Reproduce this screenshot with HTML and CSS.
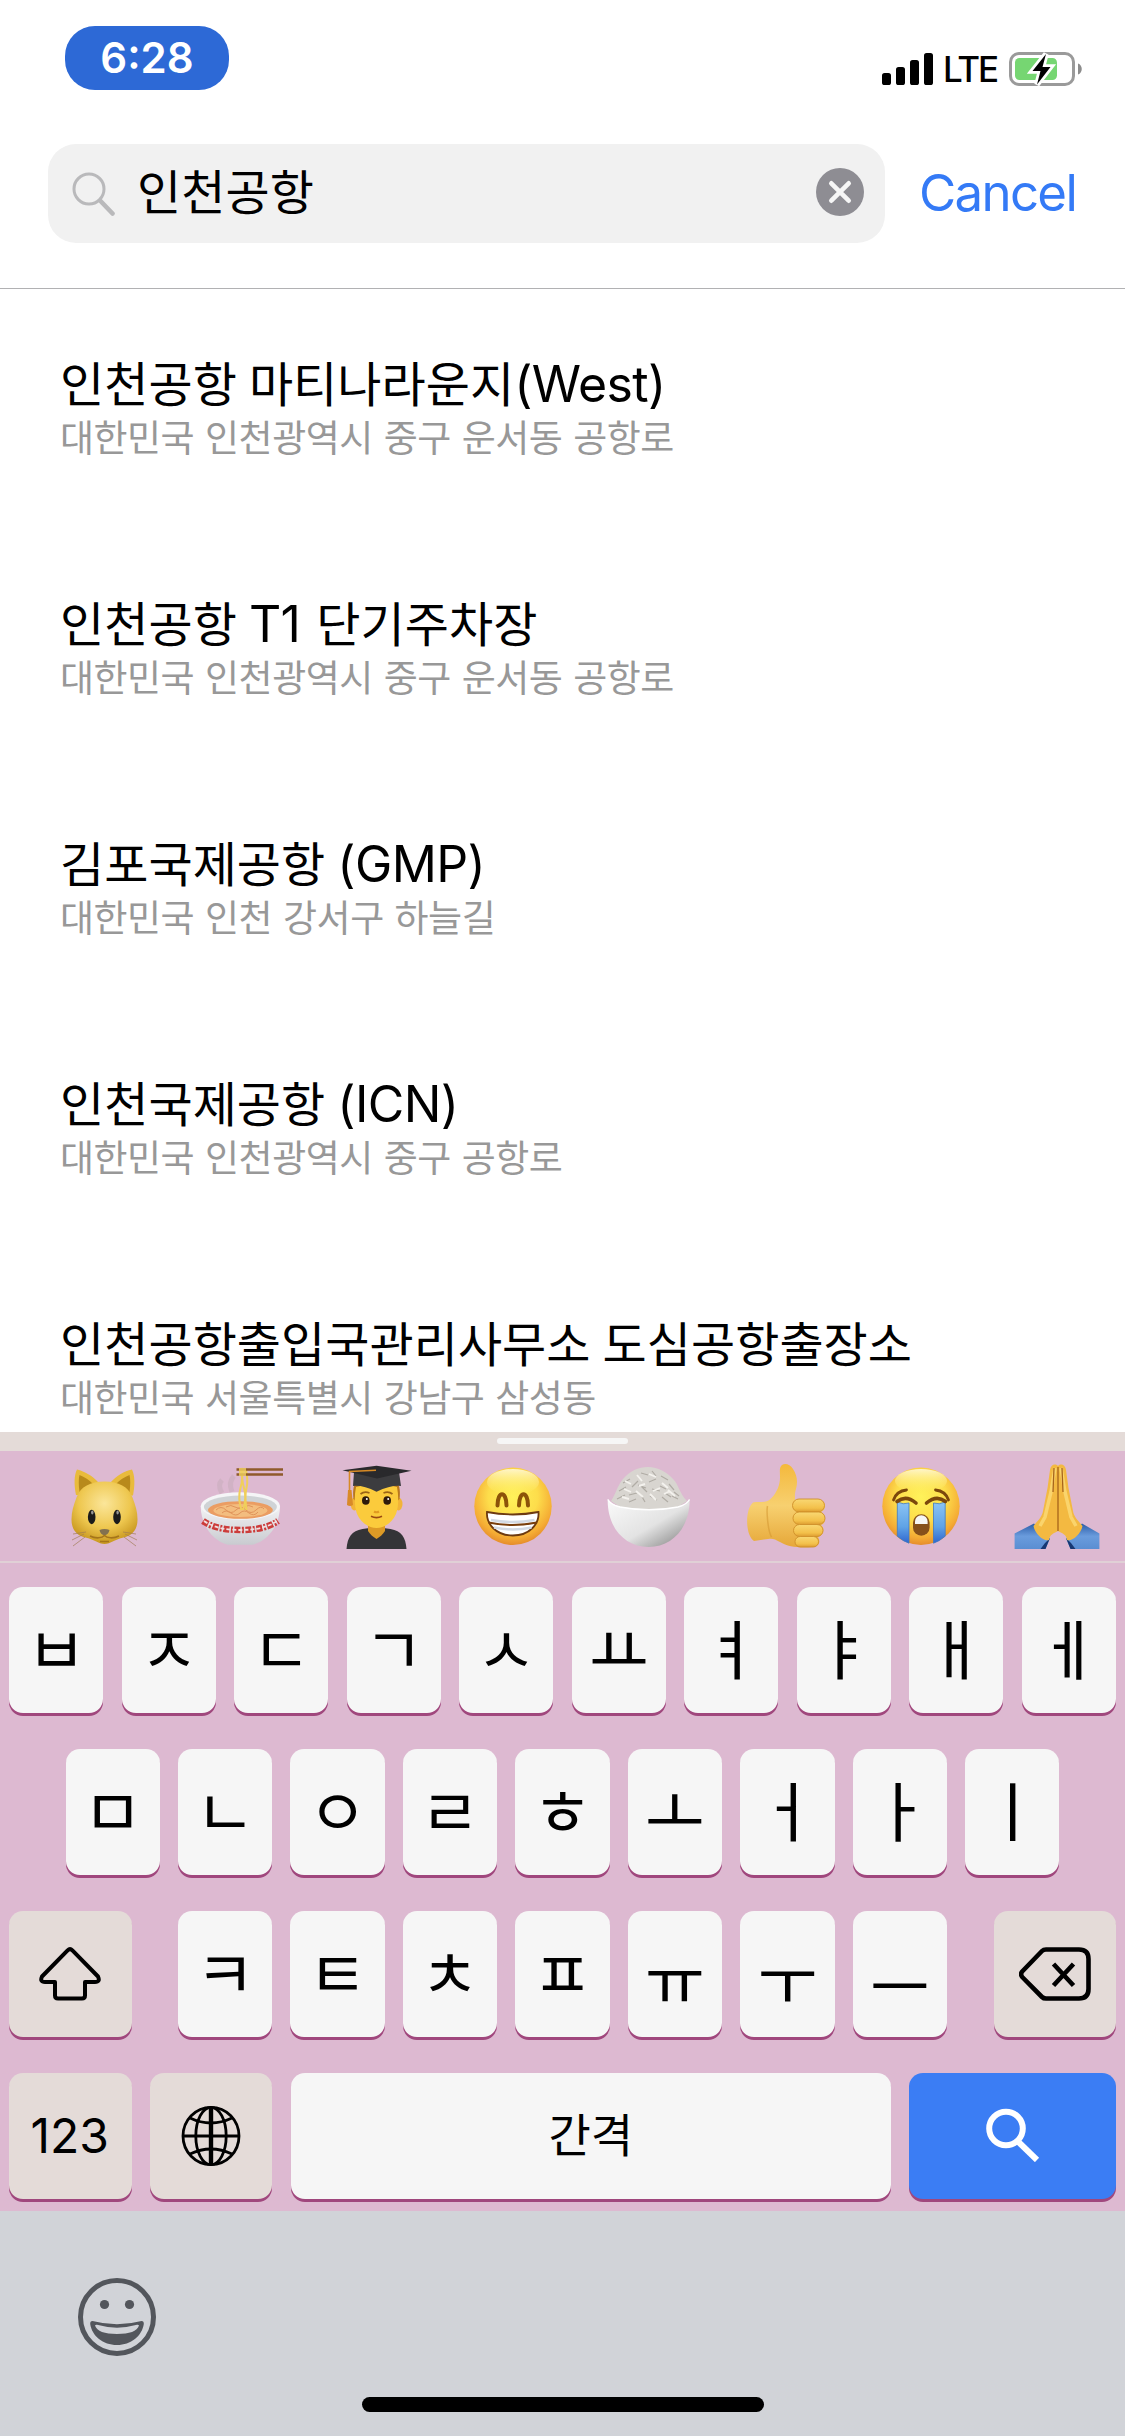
FILE: index.html
```html
<!DOCTYPE html>
<html lang="ko">
<head>
<meta charset="utf-8">
<title>인천공항</title>
<link rel="stylesheet" href="styles.css">
</head>
<body>
<div class="screen">
  <header class="status">
    <span class="clock">6:28</span>
    <div class="indicators">
      <svg class="signal" width="51" height="34" viewBox="0 0 51 34"><rect x="0" y="21" width="9" height="12" rx="2.6"/><rect x="14" y="15" width="9" height="18" rx="2.6"/><rect x="28" y="8" width="9" height="25" rx="2.6"/><rect x="42" y="1" width="9" height="32" rx="2.6"/></svg>
      <span class="network">LTE</span>
      <svg class="battery" width="74" height="34" viewBox="0 0 74 34">
        <rect x="1.5" y="1.5" width="63" height="31" rx="8.5" fill="none" stroke="#9a9a9a" stroke-width="3"/>
        <path d="M69 11.500c5 1.500 5 9.500 0 11z" fill="#8c8c8c"/>
        <rect x="6" y="6" width="42" height="22" rx="4.500" fill="#76d672"/>
        <path d="M37 2L23.500 19h8L28 32.500 41.500 15h-8z" fill="#000" stroke="#fff" stroke-width="5.500" paint-order="stroke"/>
      </svg>
    </div>
  </header>

  <div class="searchbar">
    <div class="field">
      <svg class="glass" width="44" height="44" viewBox="0 0 44 44" fill="none" stroke="#b9b9bb"><circle cx="17" cy="17" r="15" stroke-width="3"/><path d="M28.500 29L40.500 41.500" stroke-width="4.600" stroke-linecap="round"/></svg>
      <span class="query">인천공항</span>
      <svg class="clear" width="48" height="48" viewBox="0 0 48 48"><circle cx="24" cy="24" r="24" fill="#8e8d93"/><path d="M15.300 15.300L32.700 32.700M32.700 15.300L15.300 32.700" stroke="#f6f6f6" stroke-width="4.600" stroke-linecap="round"/></svg>
    </div>
    <span class="cancel">Cancel</span>
  </div>

  <main class="results">
    <article class="result"><h2>인천공항 마티나라운지<span class="latin">(West)</span></h2><p>대한민국 인천광역시 중구 운서동 공항로</p></article>
    <article class="result"><h2>인천공항 <span class="latin terminal">T1</span> 단기주차장</h2><p>대한민국 인천광역시 중구 운서동 공항로</p></article>
    <article class="result"><h2>김포국제공항 <span class="latin">(GMP)</span></h2><p>대한민국 인천 강서구 하늘길</p></article>
    <article class="result"><h2>인천국제공항 <span class="latin">(ICN)</span></h2><p>대한민국 인천광역시 중구 공항로</p></article>
    <article class="result"><h2>인천공항출입국관리사무소 도심공항출장소</h2><p>대한민국 서울특별시 강남구 삼성동</p></article>
  </main>

  <section class="keyboard">
    <div class="grabber"><i></i></div>
    <div class="emojis">
      <!-- cat -->
      <svg viewBox="0 0 88 88">
        <defs>
          <radialGradient id="cat" cx=".5" cy=".35" r=".65"><stop offset="0" stop-color="#fbe69a"/><stop offset=".6" stop-color="#eec74f"/><stop offset="1" stop-color="#c8971f"/></radialGradient>
          <radialGradient id="face" cx=".5" cy=".38" r=".64"><stop offset="0" stop-color="#fff25a"/><stop offset=".5" stop-color="#fddd4b"/><stop offset=".82" stop-color="#f5ac34"/><stop offset="1" stop-color="#e2862a"/></radialGradient>
          <linearGradient id="shine" x1="0" y1="0" x2="0" y2="1"><stop offset="0" stop-color="#fffbe0" stop-opacity=".85"/><stop offset="1" stop-color="#fff36a" stop-opacity="0"/></linearGradient>
          <linearGradient id="bowl" x1="0" y1="0" x2="1" y2="1"><stop offset="0" stop-color="#fafafa"/><stop offset=".55" stop-color="#e3e3e3"/><stop offset="1" stop-color="#7d7d7d"/></linearGradient>
          <linearGradient id="bowl2" x1="0" y1="0" x2="0" y2="1"><stop offset="0" stop-color="#f3f3f5"/><stop offset="1" stop-color="#c9cbd0"/></linearGradient>
          <linearGradient id="skin" x1="0" y1="0" x2="0" y2="1"><stop offset="0" stop-color="#f4b93c"/><stop offset=".5" stop-color="#f7d070"/><stop offset="1" stop-color="#e6a738"/></linearGradient>
          <linearGradient id="finger" x1="0" y1="0" x2="0" y2="1"><stop offset="0" stop-color="#f9d873"/><stop offset=".7" stop-color="#f3c04a"/><stop offset="1" stop-color="#dd9c31"/></linearGradient>
          <linearGradient id="tear" x1="0" y1="0" x2="0" y2="1"><stop offset="0" stop-color="#8cc4f5"/><stop offset=".6" stop-color="#5fa3e6"/><stop offset="1" stop-color="#2f66cf"/></linearGradient>
          <linearGradient id="sleeve" x1="0" y1="0" x2="0" y2="1"><stop offset="0" stop-color="#2c5da8"/><stop offset=".5" stop-color="#6a9cdd"/><stop offset="1" stop-color="#5a8ed2"/></linearGradient>
        </defs>
        <path d="M16 32C14 22 14 12 17 6.500c8 2 15 6 21.500 13h12C57 12.500 64 8 72 6.500c3 6 3 16 1 26z" fill="#e9bb3c"/>
        <path d="M19.500 29c-1-7-1-13 0-17 5 2 10 5 13.500 9zM69.500 29c1-7 1-13 0-17-5 2-10 5-13.500 9z" fill="#b88a1b"/>
        <path d="M44.500 18.500c14 0 24 5 28 16 3 8 5 14 5 22 0 10-5 16-14 18-8 1.500-13 6.500-19 6.500s-11-5-19-6.500c-9-2-14-8-14-18 0-8 2-14 5-22 4-11 14-16 28-16z" fill="url(#cat)"/>
        <ellipse cx="31.700" cy="54" rx="3.800" ry="7.200" fill="#1b1b1b"/><ellipse cx="57" cy="54" rx="3.800" ry="7.200" fill="#1b1b1b"/>
        <ellipse cx="32.300" cy="49.500" rx="1.200" ry="2" fill="#999"/><ellipse cx="57.600" cy="49.500" rx="1.200" ry="2" fill="#999"/>
        <path d="M39.500 67c3-1.500 7-1.500 10 0-.5 3-2.500 5-5 5.500-2.500-.5-4.500-2.500-5-5.500z" fill="#83714f"/>
        <path d="M30 73c6 3 12 2 14.500-.5 2.500 2.500 8.500 3.500 14.500.5M40 78.500h9" fill="none" stroke="#a5751a" stroke-width="1.600"/>
        <path d="M24 71L12 77M25 74L13 83M26 69L13 71M65 71l12 6M64 74l12 9M63 69l13 2" stroke="#a07a52" stroke-width=".9" fill="none" opacity=".75"/>
      </svg>
      <!-- noodle bowl -->
      <svg viewBox="0 0 88 88">
        <path d="M26 30q-5-8 0-13M36 29q-4-10 2-16" stroke="#c9aebd" stroke-width="5" fill="none" opacity=".6"/>
        <path d="M4.700 43c0 19 12 35 27 38.700h25C72 78 84 62 84 43z" fill="url(#bowl2)"/>
        <ellipse cx="44.400" cy="43" rx="39.700" ry="13.800" fill="#f5f5f7"/>
        <ellipse cx="44.400" cy="44" rx="36.500" ry="11.500" fill="#cfd3d6"/>
        <ellipse cx="44.400" cy="47" rx="32.500" ry="8.800" fill="#eb9d62"/>
        <ellipse cx="44.400" cy="47.500" rx="27" ry="6.500" fill="#f3bd7f"/>
        <path d="M20 47q5-5 10 0t10 0 10 0 10 0 8-1M26 50q4-4 9 0t9 0 9 0 9-1M30 44q5-3 9 0t9 0 9 0" fill="none" stroke="#e0935a" stroke-width="1"/>
        <path d="M7 58c10 7 24 9 37.500 9S72 65 82 58" fill="none" stroke="#cc3c3a" stroke-width="6.500" stroke-dasharray="6 1.500 2 1.500"/>
        <path d="M8 58c10 7 23 9 36.500 9S71 65 81 58" fill="none" stroke="#f0dedf" stroke-width="1.800" stroke-dasharray="4 2"/>
        <path d="M44.500 5q3 10 0 20t1 22M47 5q-2 10 1 20t-1 22M49.500 5q3 12 1 20t0 22" fill="none" stroke="#f0cf5a" stroke-width="2"/>
        <path d="M40.500 6.500h46.500M40.500 11.500h46.500" stroke="#8f5a2b" stroke-width="2.600"/>
        <path d="M43 5h7v8h-7z" fill="#f0d060" opacity=".8"/>
      </svg>
      <!-- graduate -->
      <svg viewBox="0 0 88 88">
        <path d="M14.500 86c1-12 5-18 16-20l14-2 14 2c11 2 15 8 16 20z" fill="#343437"/>
        <path d="M36 58h17v10c-2 3-5 6-8.500 8-3.500-2-6.500-5-8.500-8z" fill="#dd9a26"/>
        <ellipse cx="22.500" cy="41" rx="4" ry="6.500" fill="#f2b438"/><ellipse cx="66.500" cy="41" rx="4" ry="6.500" fill="#f2b438"/>
        <path d="M21.500 36c-1-8 0-13 2-16h42c2 3 3 8 2 16l-4 4h-38z" fill="#b9781c"/>
        <path d="M24 24q20.500-6 41 0c2 10 1.500 20-1 27-4 9-12 14-19.500 14S29 60 25 51c-2.500-7-3-17-1-27z" fill="#fbcb3c"/>
        <ellipse cx="33.800" cy="37.500" rx="3.800" ry="4.300" fill="#2e1a0b"/><ellipse cx="55.200" cy="37.500" rx="3.800" ry="4.300" fill="#2e1a0b"/>
        <circle cx="34.800" cy="36" r="1" fill="#fff"/><circle cx="56.200" cy="36" r="1" fill="#fff"/>
        <path d="M28.500 31q4-3 9-1M51.500 30q5-2 9 1" stroke="#9b6416" stroke-width="1.800" fill="none"/>
        <path d="M42 48.500q2.500 1.500 5 0" stroke="#e09a20" stroke-width="2.200" fill="none"/><path d="M39 53.300q5.500 2.500 11 0" stroke="#9a4a12" stroke-width="1.700" fill="none"/>
        <path d="M22 9h45l2 14q-10-1-24.500 5.700Q31 22 21 23z" fill="#3c3c3f"/>
        <path d="M10.500 7.200L44.500 2.700l35 5-34.500 7.800z" fill="#29292c"/>
        <path d="M44 7.200L17.500 8.500V28" stroke="#d78a25" stroke-width="1.600" fill="none"/>
        <path d="M16 27h3.500l1.500 15q-3 2-6 0z" fill="#d98a28"/>
      </svg>
      <!-- beaming face -->
      <svg viewBox="0 0 88 88">
        <circle cx="44" cy="43.300" r="38.700" fill="url(#face)"/><ellipse cx="44" cy="19" rx="26" ry="13" fill="url(#shine)"/>
        <path d="M28.500 42.500c0-15 9-15 9 0M50 42.500c0-15 9-15 9 0" fill="none" stroke="#8c5309" stroke-width="4" stroke-linecap="round"/>
        <path d="M18 49q26 5 51.500 0c1 12-9 23.500-25.700 23.500S17 61 18 49z" fill="#fff" stroke="#6d3a10" stroke-width="1.800"/>
        <path d="M19.500 59.500q24 5 48.500 0" stroke="#7a3f0c" stroke-width="2" fill="none"/>
        <path d="M22 57q22 4 43.500 0M25 64.500q19 4 37.500 0" stroke="#d3dae4" stroke-width="2.500" fill="none"/>
      </svg>
      <!-- rice bowl -->
      <svg viewBox="0 0 88 88">
        <path d="M6 38C11 31 12 23 18 16 25 8 33 4 43 4s19 5 25 12c6 6 6 14 14 22L64 50H24z" fill="#d8d5d0"/>
        <path d="M18 20l7-4m2 8l6-6m3-8l7 2m4-4l4 5m5 0l7 4m-30 5l8 3m3-6l7-3m4 7l6 3m3-5l5 6M14 28l7-4m3 8l8-2m4-7l6 6m5-3l8 2m5 2l6 4m3-5l5 4M12 36l8-4m4 7l7-3m5-4l4 7m5-6l7 4m5-3l6 5m4-6l6 3" stroke="#b0aca5" stroke-width="1.200"/>
        <path d="M20 18l6 3m6-9l5 6m7-7l7 3m6 6l6 5M19 26l7 3m8-6l6-2m8 7l7-3m8 2l7 6M17 34l7 2m7-8l7 6m7-3l6 6m8-6l6-3" stroke="#f4f2ee" stroke-width="1.900"/>
        <path d="M2.700 36q2 5 12 7.500c18 3.500 40 3.500 58 0Q82.500 41 84.600 36C85 65 67 84 43.600 84S2 65 2.700 36z" fill="url(#bowl)"/>
        <path d="M3 36.500q2 5 12 7.500c18 3.500 40 3.500 58 0q9-2.500 11.500-7.500" stroke="#fff" stroke-width="1.400" fill="none"/>
      </svg>
      <!-- thumbs up -->
      <svg viewBox="0 0 88 88">
        <path d="M12 39.500c7-1 13 1 18-4 6-6 9-14 9-21 0-6-1-10 2-12.500 3-2 8-1 11 4 4 6 5 13 3 20-1.500 5-1 8-1 11h23c9 0 9 10 3 12 6 3 5 12 0 13 4 3 3 10-3 12 3 5 1 10-6 10-12 1-24 0-32-5-5-3-8-4-12-3l-14 2C4 72 4 46 12 39.500z" fill="url(#skin)"/>
        <path d="M26.500 43c-1 4 0 24 4 31" stroke="#d59a33" stroke-width="1.500" fill="none" opacity=".6"/>
        <g fill="url(#finger)" stroke="#cf9029" stroke-width=".9"><rect x="51.500" y="36" width="32" height="13" rx="6.500"/><rect x="52" y="49" width="32" height="12.500" rx="6.200"/><rect x="52.500" y="61.500" width="29.500" height="12" rx="6"/><rect x="54" y="73.500" width="23.500" height="10.500" rx="5.200"/></g>
      </svg>
      <!-- loudly crying face -->
      <svg viewBox="0 0 88 88">
        <circle cx="44" cy="43.300" r="38.700" fill="url(#face)"/><ellipse cx="44" cy="18" rx="26" ry="12" fill="url(#shine)"/>
        <path d="M20.300 39q6 3 11.700 1v40.200q-6-2-11.700-7zM68.200 39q-6 3-11.700 1v40.200q6-2 11.700-7z" fill="url(#tear)" stroke="#3d78c4" stroke-width=".8"/>
        <path d="M16.500 37q3-9 13-10M71.500 37q-3-9-13-10" fill="none" stroke="#7c480c" stroke-width="2.800" stroke-linecap="round"/>
        <path d="M20 38.500q9-7 19 1.500M68.500 38.500q-9-7-19 1.500" fill="none" stroke="#7c480c" stroke-width="3.600" stroke-linecap="round"/>
        <rect x="36" y="51.200" width="16.600" height="21.500" rx="8.300" fill="#86501a"/><path d="M38 61v-2.500a6.300 6.300 0 0 1 12.600 0V61z" fill="#f6f6f4"/>
      </svg>
      <!-- folded hands -->
      <svg viewBox="0 0 88 88">
        <path d="M1.600 70.500L21 60.500l16 15-4.500 10.500H1.600zM86.400 70.500L69 60.500l-16 15 4.500 10.500h28.900z" fill="url(#sleeve)"/>
        <path d="M32 80l5-5-4.500 11h-5zM58 80l-5-5 4.500 11h5z" fill="#173873"/>
        <path d="M45 68c-5 3-8 3-9 9-5 2-14-6-15.500-14 5-6 9-10 9.500-15l4.500-23 2.500-18c.5-5 5-7 8-4 3-3 7.500-1 8 4l2.500 18L60 48c.5 5 4.500 9 9.500 15C68 71 59 79 54 77c-1-6-4-6-9-9z" fill="#f3b941"/>
        <path d="M42 5l-4 24-6 25-5 9M48 5l4 24 6 25 5 9" stroke="#fad46c" stroke-width="3.500" fill="none"/>
        <path d="M45 4v64M41 5l-1 24M49 5l1 24" stroke="#a7641a" stroke-width="1.300" fill="none"/>
      </svg>
    </div>

    <div class="keys">
      <div class="row">
        <b class="key">ㅂ</b><b class="key">ㅈ</b><b class="key">ㄷ</b><b class="key">ㄱ</b><b class="key">ㅅ</b><b class="key">ㅛ</b><b class="key">ㅕ</b><b class="key">ㅑ</b><b class="key">ㅐ</b><b class="key">ㅔ</b>
      </div>
      <div class="row">
        <b class="key">ㅁ</b><b class="key">ㄴ</b><b class="key">ㅇ</b><b class="key">ㄹ</b><b class="key">ㅎ</b><b class="key">ㅗ</b><b class="key">ㅓ</b><b class="key">ㅏ</b><b class="key">ㅣ</b>
      </div>
      <div class="row spread">
        <b class="key side"><svg width="62" height="54" viewBox="0 0 62 54" fill="none" stroke="#000" stroke-width="4" stroke-linejoin="round"><path d="M28.600 3.400Q31 1 33.400 3.400L59 29.500Q61.500 35 56 35H46V48.500Q46 51.500 43 51.500H19Q16 51.500 16 48.500V35H6Q.5 35 3 29.500Z"/></svg></b>
        <div class="row">
          <b class="key">ㅋ</b><b class="key">ㅌ</b><b class="key">ㅊ</b><b class="key">ㅍ</b><b class="key low">ㅠ</b><b class="key low">ㅜ</b><b class="key lowest">ㅡ</b>
        </div>
        <b class="key side"><svg width="72" height="54" viewBox="0 0 72 54" fill="none" stroke="#000" stroke-linejoin="round"><path d="M27 2.500H60Q69.500 2.500 69.500 12V42Q69.500 51.500 60 51.500H27Q24.500 51.500 23 50L3.200 30Q1 27 3.200 24.500L23 4Q24.500 2.500 27 2.500Z" stroke-width="4.600"/><path d="M34.500 17L54.500 38.500M54.500 17L34.500 38.500" stroke-width="4.600"/></svg></b>
      </div>
      <div class="row">
        <b class="key side num">123</b>
        <b class="key side globe"><svg width="60" height="62" viewBox="0 0 60 62" fill="none" stroke="#000" stroke-width="2.800"><ellipse cx="30" cy="31" rx="28" ry="28.700"/><ellipse cx="30" cy="31" rx="15.200" ry="28.700"/><path d="M2 31H58M9 13Q30 23 51 13M9 49Q30 39 51 49"/><path d="M30 2V60" stroke-width="4.400"/></svg></b>
        <b class="key space">간격</b>
        <b class="key go"><svg width="54" height="54" viewBox="0 0 54 54" fill="none" stroke="#fff" stroke-width="6"><circle cx="20" cy="20.500" r="16.800"/><path d="M32.500 34L51 52"/></svg></b>
      </div>
    </div>
  </section>

  <footer class="dock">
    <svg class="smiley" width="78" height="78" viewBox="0 0 78 78" fill="none" stroke="#53565c"><circle cx="39" cy="39" r="36.500" stroke-width="5"/><g fill="#53565c" stroke="none"><ellipse cx="26.500" cy="26.500" rx="4.600" ry="4.600"/><ellipse cx="51.500" cy="26.500" rx="4.600" ry="4.600"/><path fill-rule="evenodd" d="M14.500 43Q39 49.500 63.500 43Q66 43 65.800 46C64 58 53 67 39 67S14 58 12.200 46Q12 43 14.500 43ZM17 47.500Q20 56 39 56T61 47.500Q60.500 46.500 59 46.800Q39 52.500 19 46.800Q17.500 46.500 17 47.500Z"/></g></svg>
    <i class="home"></i>
  </footer>
</div>
</body>
</html>
```
FILE: styles.css
```css
* { box-sizing: border-box; margin: 0; padding: 0; }

body { background: #fff; }

.screen {
  width: 1125px;
  height: 2436px;
  display: flex;
  flex-direction: column;
  overflow: hidden;
  background: #fff;
  color: #000;
  font-family: "Inter", "Noto Sans CJK KR", sans-serif;
}

svg { display: block; flex: none; }

/* status bar */
.status {
  height: 144px;
  flex: none;
  display: flex;
  justify-content: space-between;
  align-items: flex-start;
  padding: 26px 42px 0 65px;
}
.clock {
  width: 164px;
  height: 64px;
  border-radius: 30px;
  background: #2d69d6;
  color: #fff;
  font-size: 42px;
  font-weight: 600;
  line-height: 63px;
  text-align: center;
}
.indicators { display: flex; align-items: center; margin-top: 26px; }
.network {
  width: 76px;
  padding-left: 10px;
  font-size: 35px;
  font-weight: 500;
  line-height: 34px;
  letter-spacing: -2.2px;
}

/* search */
.searchbar {
  height: 145px;
  flex: none;
  display: flex;
  align-items: flex-start;
  padding-left: 48px;
  border-bottom: 1px solid #b1b1b3;
}
.field {
  width: 837px;
  height: 99px;
  border-radius: 28px;
  background: #f1f1f1;
  display: flex;
  align-items: center;
  padding: 0 21px 0 24px;
}
.query {
  flex: 1;
  margin-left: 21px;
  padding-bottom: 9px;
  font-family: "Noto Sans CJK KR", sans-serif;
  font-size: 48px;
  line-height: 60px;
  letter-spacing: .1px;
}
.clear { margin-bottom: 3px; }
.cancel {
  margin-left: 34px;
  color: #347af6;
  font-size: 51px;
  line-height: 97px;
  letter-spacing: -1.700px;
}

/* results */
.results { height: 1143px; flex: none; overflow: hidden; }
.result { height: 240px; padding: 66px 0 0 60px; white-space: nowrap; }
.result h2 { font-size: 48px; font-weight: 400; line-height: 60px; letter-spacing: .05px; word-spacing: -1.500px; }
.result p { margin-top: 1px; font-size: 37px; line-height: 46px; letter-spacing: -.5px; word-spacing: 1px; color: #989898; }
.latin { font-size: 50px; line-height: 1; letter-spacing: -.6px; }
.terminal { margin-right: 4px; }

/* keyboard */
.keyboard { height: 779px; flex: none; background: #ddb9d1; }
.grabber { height: 19px; background: #e4dbd8; padding-top: 6px; }
.grabber i { display: block; width: 131px; height: 6px; margin: 0 auto; border-radius: 3px; background: #f6f6f6; }
.emojis {
  height: 112px;
  display: grid;
  grid-template-columns: repeat(8, 136.2px);
  justify-items: center;
  padding: 12px 0 0 36px;
  border-bottom: 2px solid #e0d0d6;
  overflow: hidden;
}
.emojis svg { width: 88px; height: 88px; }
.keys { display: flex; flex-direction: column; gap: 36px; padding: 24px 9px 0; }
.row { display: flex; justify-content: center; gap: 18.4px; }
.spread { justify-content: space-between; }
.key {
  width: 94.1px;
  height: 126px;
  flex: none;
  display: flex;
  align-items: center;
  justify-content: center;
  padding-bottom: 8px;
  border-radius: 14px;
  background: #f6f6f6;
  box-shadow: 0 3px 0 #a0477d;
  font-family: "Noto Sans CJK KR", sans-serif;
  font-size: 65px;
  font-weight: 400;
  line-height: 118px;
}
.low { padding: 5px 0 0; }
.lowest { padding: 18px 0 0; line-height: 108px; }
.side { width: 122.500px; padding: 0; background: #e4dbd8; }
.num { padding-right: 1px; font-family: "Inter", sans-serif; font-size: 48px; font-weight: 400; }
.space { width: auto; flex: 1; font-size: 46px; padding-bottom: 8px; }
.go { width: 207px; padding-bottom: 3px; background: #3b7df4; }

/* dock */
.dock { flex: 1; display: flex; flex-direction: column; background: #d1d3d8; padding-top: 67px; }
.smiley { margin-left: 78px; }
.home { width: 402px; height: 15px; margin: 41px 0 0 362px; border-radius: 8px; background: #000; }
```
